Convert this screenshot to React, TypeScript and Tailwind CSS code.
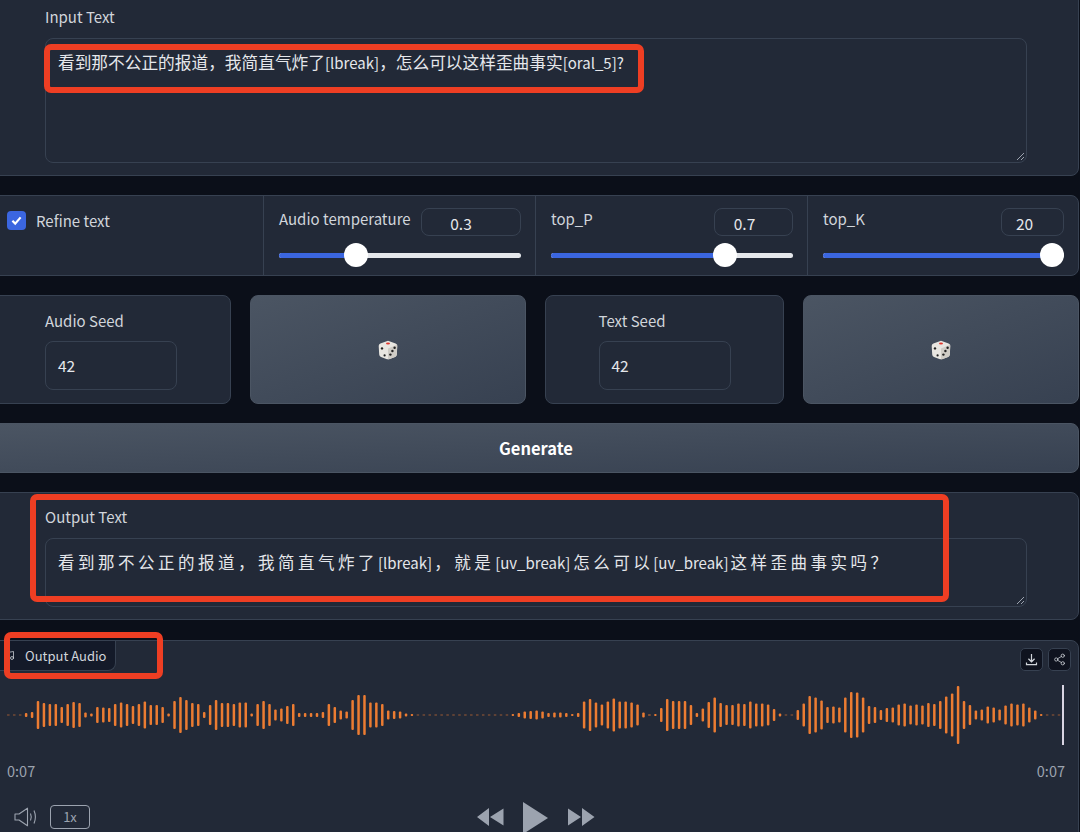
import { Music, Share2 } from 'lucide-react';

const BARS = [
  1, 1, 1, 4, 6, 28, 24, 22, 22, 16, 22, 26, 24, 5, 3, 16, 15, 14, 22, 25, 22, 18, 22, 27, 20, 20, 16, 3, 28, 36,
  30, 24, 22, 6, 20, 30, 24, 24, 22, 25, 25, 3, 22, 28, 22, 11, 13, 18, 22, 4, 4, 4, 4, 6, 22, 16, 9, 7, 30, 40,
  40, 25, 25, 22, 9, 8, 7, 3, 2, 1, 1, 1, 1, 1, 1, 1, 1, 1, 1, 1, 1, 1, 1, 1, 1, 2, 4, 7, 8, 9,
  7, 4, 5, 5, 4, 2, 4, 27, 32, 25, 21, 27, 33, 27, 27, 25, 21, 5, 1.5, 2, 14, 32, 28, 28, 28, 20, 4, 13, 26, 35,
  24, 20, 20, 23, 22, 27, 23, 23, 21, 12, 3, 1, 1, 10, 23, 38, 35, 29, 16, 17, 15, 35, 46, 45, 35, 18, 16, 10, 14, 15,
  21, 23, 19, 21, 19, 24, 22, 28, 37, 43, 58, 28, 20, 9, 11, 17, 15, 11, 19, 23, 21, 23, 15, 9, 2, 1, 1, 1,
];

const Dice = () => (
  <svg width="20" height="20" viewBox="0 0 20 20">
    <path d="M10 .8 17.6 3.4Q19.4 4 19.3 6L18.8 14.6Q18.7 16.3 17 17L11 19.2Q10 19.5 9 19.2L3 17Q1.3 16.3 1.2 14.6L.7 6Q.6 4 2.4 3.4Z" fill="#e8e6e1" />
    <path d="M10 8.6 19.2 4.8 18.8 14.6Q18.7 16.3 17 17L11 19.2Q10.4 19.4 10 19.3Z" fill="#cfccc6" />
    <ellipse cx="10" cy="3.6" rx="2" ry="1" fill="#e0382e" />
    <circle cx="4" cy="8.4" r="1.2" fill="#222" />
    <circle cx="6.6" cy="15.4" r="1.1" fill="#222" />
    <circle cx="16.6" cy="7.8" r="1.2" fill="#222" />
    <circle cx="14.4" cy="11" r="1.2" fill="#222" />
    <circle cx="12.4" cy="14.6" r="1.2" fill="#222" />
  </svg>
);

const Resize = () => (
  <svg className="absolute right-[1px] bottom-[1px]" width="9" height="9" viewBox="0 0 9 9" stroke="#9ca3af" strokeWidth="1">
    <path d="M1 8 8 1M5 8 8 5" />
  </svg>
);

const SliderCell = ({ label, value, pct, inputCls, last }: { label: string; value: string; pct: number; inputCls: string; last?: boolean }) => (
  <div className={`pl-[15px] pr-[14px] pt-[12px] ${last ? 'flex-1' : 'w-[272px] border-r border-[#374151]'}`}>
    <div className="flex justify-between">
      <span className="whitespace-nowrap text-[15px] leading-[22px] text-[#d1d5db]">{label}</span>
      <div className={`h-[28px] ${inputCls} rounded-[8px] border border-[#374151] text-center text-[15.5px] leading-[28px] text-[#e5e7eb]`}>{value}</div>
    </div>
    <div className="relative mt-[7px] h-[24px]">
      <div className="absolute top-[10px] h-[5px] w-full rounded-full bg-[#e5e7eb]" />
      <div className="absolute top-[10px] h-[5px] rounded-full bg-[#3b66e0]" style={{ width: `${pct}%` }} />
      <div className="absolute top-0 h-[24px] w-[24px] -translate-x-1/2 rounded-full bg-white" style={{ left: `${pct}%` }} />
    </div>
  </div>
);

const SeedCard = ({ label, width, pl }: { label: string; width: string; pl: string }) => (
  <div className={`${width} ${pl} h-[109px] rounded-[8px] border border-[#374151] bg-[#222937] pt-[14px]`}>
    <div className="text-[15px] leading-[22px] text-[#d1d5db]">{label}</div>
    <div className="mt-[9px] h-[49px] w-[132px] rounded-[8px] border border-[#374151] pl-[12px] text-[15.5px] leading-[47px] text-[#e5e7eb]">42</div>
  </div>
);

const DiceButton = ({ width }: { width: string }) => (
  <div className={`${width} flex h-[109px] items-center justify-center rounded-[8px] border border-[#4b5563] bg-gradient-to-br from-[#4b5563] to-[#374151]`}>
    <Dice />
  </div>
);

const Cjk = ({ children }: { children: string }) => <span className="text-[16.5px] tracking-[3.5px]">{children}</span>;
const Han = ({ children }: { children: string }) => <span className="text-[16.7px]">{children}</span>;

export default function App() {
  return (
    <div className="relative h-[832px] w-[1080px] overflow-hidden bg-[#0b0f19]" style={{ fontFamily: '"Noto Sans CJK SC", sans-serif' }}>
      <div className="-ml-[12px] -mt-[12px] flex w-[1091px] flex-col gap-[19px]">
        {/* Input */}
        <div className="h-[188px] rounded-[8px] border border-[#374151] bg-[#222937] pl-[56px] pt-[17px]">
          <div className="text-[15px] leading-[22px] text-[#d1d5db]">Input Text</div>
          <div className="relative mt-[10px] h-[125px] w-[982px] rounded-[8px] border border-[#374151] pl-[12px] pt-[12px] text-[15px] leading-[22px] text-[#e5e7eb]">
            <Han>看到那不公正的报道，我简直气炸了</Han>[lbreak]<Han>，怎么可以这样歪曲事实</Han>[oral_5]?
            <Resize />
          </div>
        </div>

        {/* Settings */}
        <div className="flex h-[81px] rounded-[8px] border border-[#374151] bg-[#222937]">
          <div className="flex w-[275px] items-start gap-[10px] border-r border-[#374151] pl-[18px] pt-[15px]">
            <div className="flex h-[19px] w-[19px] items-center justify-center rounded-[4px] bg-[#3b66e0]">
              <svg width="13" height="13" viewBox="0 0 13 13" fill="none" stroke="white" strokeWidth="2.2">
                <path d="M2.4 6.8 5.2 9.6 10.6 3.4" />
              </svg>
            </div>
            <span className="text-[15px] leading-[20px] text-[#d1d5db]">Refine text</span>
          </div>
          <SliderCell label="Audio temperature" value="0.3" pct={32} inputCls="w-[100px] pr-[20px]" />
          <SliderCell label="top_P" value="0.7" pct={72} inputCls="w-[79px] pr-[18px]" />
          <SliderCell label="top_K" value="20" pct={95} inputCls="w-[63px] pr-[16px]" last />
        </div>

        {/* Seeds */}
        <div className="flex gap-[19px]">
          <SeedCard label="Audio Seed" width="w-[243px]" pl="pl-[56px]" />
          <DiceButton width="w-[276px]" />
          <SeedCard label="Text Seed" width="w-[240px]" pl="pl-[53px]" />
          <DiceButton width="w-[276px]" />
        </div>

        <div className="flex h-[50px] items-center justify-center rounded-[8px] border border-[#4b5563] bg-gradient-to-br from-[#4b5563] to-[#374151] pl-[5px] text-[16.5px] font-semibold text-white">
          Generate
        </div>

        {/* Output */}
        <div className="h-[128px] rounded-[8px] border border-[#374151] bg-[#222937] pl-[56px] pt-[13px]">
          <div className="text-[15px] leading-[22px] text-[#d1d5db]">Output Text</div>
          <div className="relative mt-[10px] h-[69px] w-[982px] rounded-[8px] border border-[#374151] pl-[12px] pt-[12px] text-[15px] leading-[22px] text-[#e5e7eb]">
            <Cjk>看到那不公正的报道，我简直气炸了</Cjk>[lbreak]<span className="ml-[2px]"><Cjk>，就是</Cjk></span>
            <span className="ml-[1px] mr-[3px]">[uv_break]</span><Cjk>怎么可以</Cjk>
            <span className="mr-[2px]">[uv_break]</span><Cjk>这样歪曲事实吗？</Cjk>
            <Resize />
          </div>
        </div>

        {/* Audio */}
        <div className="mt-[1px] h-[220px] rounded-[8px] border border-[#374151] bg-[#222937]">
          <div className="flex items-start justify-between pr-[7px]">
            <div className="flex h-[30px] items-center gap-[10px] rounded-br-[8px] border-b border-r border-[#374151] bg-[#141a29] pl-[14px] pr-[9px] text-[13px] text-[#d1d5db]">
              <Music size={12} strokeWidth={1.5} />
              <span>Output Audio</span>
            </div>
            <div className="mt-[7px] flex gap-[5px]">
              <div className="flex h-[23px] w-[23px] items-center justify-center rounded-[5px] border border-[#374151] bg-[#0f131f]">
                <svg width="13" height="13" viewBox="0 0 13 13" fill="none" stroke="#d1d5db" strokeWidth="1.2">
                  <path d="M6.5 1V8.6M3.4 5.8 6.5 8.8 9.6 5.8M1.5 9.5V11.7H11.5V9.5" />
                </svg>
              </div>
              <div className="flex h-[23px] w-[23px] items-center justify-center rounded-[5px] border border-[#374151] bg-[#0f131f] text-[#d1d5db]">
                <Share2 size={13} strokeWidth={1.4} />
              </div>
            </div>
          </div>
          <svg className="ml-[11px] mt-[13px] block" width="1068" height="62" viewBox="0 0 1068 62">
            {BARS.map((h, i) => (
              <rect
                key={i}
                x={8.32 + 5.936 * i - 1.25}
                y={31 - h / 2}
                width={2.5}
                height={h}
                rx={h < 2 ? 0 : 1}
                fill="#ec7c32"
                opacity={h < 2 ? 0.6 : 1}
              />
            ))}
            <rect x={1062} y={1} width={2} height={60} fill="#d9d5e2" />
          </svg>
          <div className="mt-[15px] flex w-[1076px] justify-between pl-[18px] text-[14.5px] leading-[20px] text-[#9ca3af]">
            <span>0:07</span>
            <span>0:07</span>
          </div>
          <div className="mt-[17px] flex items-center pl-[25px]">
            <svg width="24" height="20" viewBox="0 0 24 20" fill="none" stroke="#9ca3af" strokeWidth="1.1">
              <path d="M1 7H5L13.5 1.2V18.8L5 13H1Z" strokeLinejoin="round" />
              <path d="M16.5 6.5Q18 10 16.5 13.5M20 3.5Q22.8 10 20 16.5" />
            </svg>
            <div className="ml-[12px] flex h-[24px] w-[40px] items-center justify-center rounded-[4px] border-[1.5px] border-[#9ca3af] text-[13px] text-[#9ca3af]">1x</div>
            <div className="ml-[387px] flex items-center">
              <svg width="27" height="18" viewBox="0 0 27 18" fill="#9ca3af">
                <path d="M0 9 12 0V18ZM13 9 26.5 .5V17.5Z" />
              </svg>
              <svg className="ml-[19px] mt-[4px]" width="25" height="34" viewBox="0 0 25 34" fill="#9ca3af">
                <path d="M0 0 25 16 0 32Z" />
              </svg>
              <svg className="ml-[20px]" width="27" height="18" viewBox="0 0 27 18" fill="#9ca3af">
                <path d="M0 .5 13 9 0 17.5ZM14 0 26.5 9 14 18Z" />
              </svg>
            </div>
          </div>
        </div>
      </div>

      {/* red annotation boxes */}
      <div className="absolute left-[44px] top-[44px] h-[49px] w-[600px] rounded-[7px] border-[6px] border-[#ee3e23]" />
      <div className="absolute left-[30px] top-[494px] h-[108px] w-[919px] rounded-[7px] border-[6px] border-[#ee3e23]" />
      <div className="absolute left-[4px] top-[632px] h-[47px] w-[159px] rounded-[7px] border-[6px] border-[#ee3e23]" />
    </div>
  );
}
